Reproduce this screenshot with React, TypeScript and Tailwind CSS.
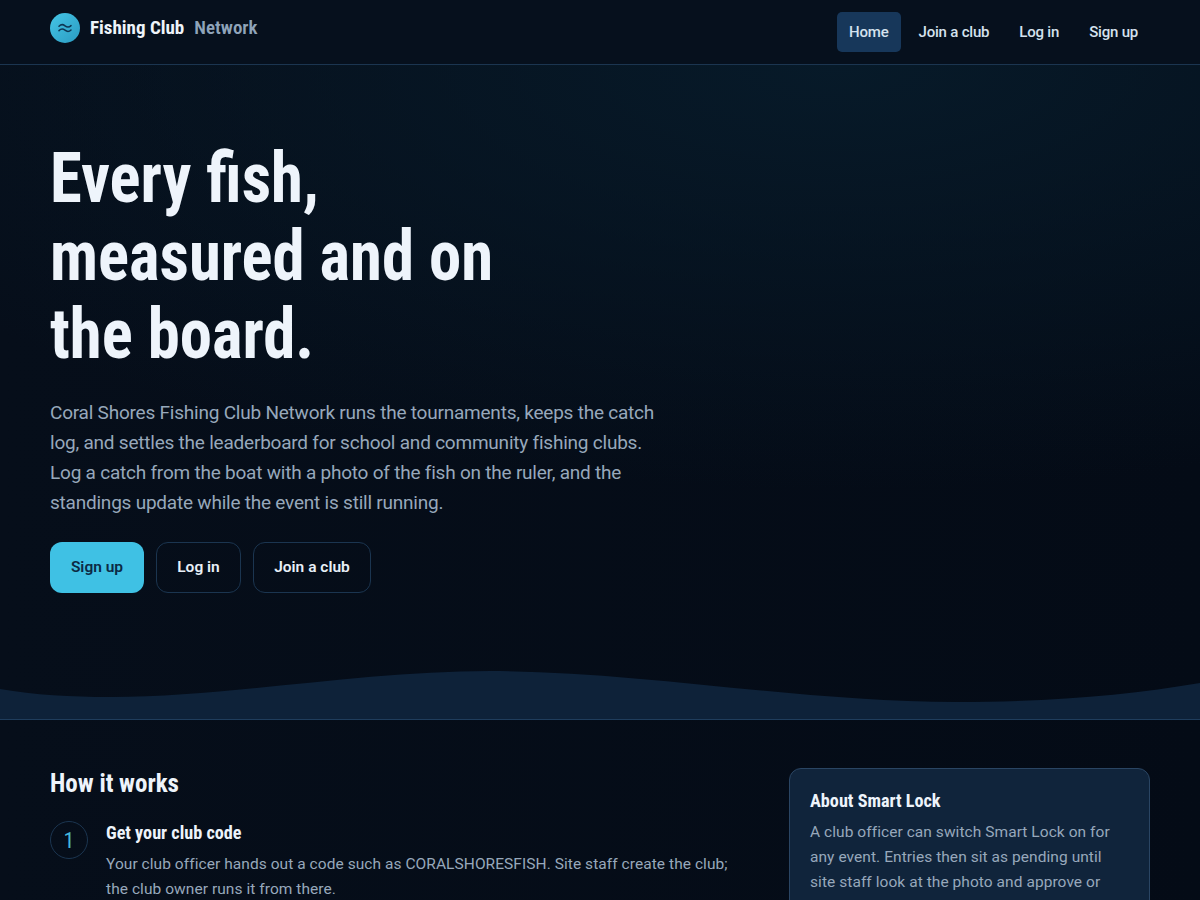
const condensed = "font-['Roboto_Condensed',Roboto,sans-serif]"

function Logo() {
  return (
    <div className="flex h-[30px] w-[30px] items-center justify-center rounded-full bg-gradient-to-br from-[#45c6e6] to-[#2a9bc2]">
      <svg width="14" height="10" viewBox="0 0 14 10" fill="none" stroke="#0e3653" strokeWidth="1.5" strokeLinecap="round">
        <path d="M1 3.2C3 1.2 5 1.2 7 2.8S11 4.6 13 2.6" />
        <path d="M1 7.6C3 5.6 5 5.6 7 7.2S11 9 13 7" />
      </svg>
    </div>
  )
}

export default function App() {
  return (
    <div className="min-h-[900px] bg-gradient-to-r from-[#060e1a] to-[#040b16] font-['Roboto',sans-serif] text-[#e8f0f8]">
      <header className="flex h-[65px] items-start justify-between border-b border-[#1b3550] bg-[#06101d] px-[50px] pt-3">
        <div className="mt-px flex items-center gap-[10px]">
          <Logo />
          <span className={`${condensed} text-[19px] font-bold leading-[30px] text-[#eef4fa]`}>Fishing Club</span>
          <span className={`${condensed} text-[19px] font-semibold leading-[30px] text-[#8fa4ba]`}>Network</span>
        </div>
        <nav className="flex gap-[6px] text-[15px] font-medium tracking-[-0.2px] text-[#d5e2ee]">
          <a className="flex h-10 items-center rounded-[5px] bg-[#17375a] px-3">Home</a>
          <a className="flex h-10 items-center rounded-[5px] px-3">Join a club</a>
          <a className="flex h-10 items-center rounded-[5px] px-3">Log in</a>
          <a className="flex h-10 items-center rounded-[5px] px-3">Sign up</a>
        </nav>
      </header>

      <section className="border-b border-[#1f3d5c] bg-[radial-gradient(ellipse_90%_65%_at_70%_0%,#071a29_0%,transparent_100%)]">
        <div className="px-[50px] pt-[74px]">
          <h1 className={`${condensed} w-[620px] origin-left scale-x-[0.925] text-[70px] font-bold leading-[78px] text-[#eef4fb]`}>
            Every fish,
            <br />
            measured and on
            <br />
            the board.
          </h1>
          <p className="mt-[25px] w-[620px] text-[19px] leading-[30px] tracking-[-0.22px] text-[#97a8bb]">
            Coral Shores Fishing Club Network runs the tournaments, keeps the catch log, and settles the leaderboard for school and community fishing clubs. Log a catch from the boat with a photo of the fish on the ruler, and the standings update while the event is still running.
          </p>
          <div className="mt-[24px] flex gap-3 text-[15.5px] font-semibold">
            <a className="flex h-[51px] w-[94px] items-center justify-center rounded-xl bg-[#3fc1e4] text-[#0c2a44]">Sign up</a>
            <a className="flex h-[51px] w-[85px] items-center justify-center rounded-xl border border-[#1b3550]">Log in</a>
            <a className="flex h-[51px] w-[118px] items-center justify-center rounded-xl border border-[#1b3550]">Join a club</a>
          </div>
        </div>
        <svg className="mt-[77px] block h-[49px] w-full" viewBox="0 0 1200 49" preserveAspectRatio="none" fill="#0e2239">
          <path d="M0,19 C35,25 70,27 111,27 C230,27 360,1 490,1 C640,1 800,32 957,32 C1050,32 1130,25 1200,13 L1200,49 L0,49 Z" />
        </svg>
      </section>

      <section className="grid grid-cols-[1fr_361px] gap-[50px] px-[50px] pt-12">
        <div>
          <h2 className={`${condensed} text-[25px] font-bold leading-[32px] text-[#eef4fb]`}>How it works</h2>
          <div className="mt-[21px] flex gap-[18px]">
            <div className={`${condensed} flex h-[38px] w-[38px] shrink-0 items-center justify-center rounded-full border border-[#1b3550] text-[22px] text-[#45b8d8]`}>1</div>
            <div>
              <h3 className={`${condensed} text-[18.2px] font-bold leading-6 text-[#eef4fb]`}>Get your club code</h3>
              <p className="mt-[7px] text-[15.5px] leading-[25px] tracking-[0.06px] text-[#97a8bb]">
                Your club officer hands out a code such as CORALSHORESFISH. Site staff create the club; the club owner runs it from there.
              </p>
            </div>
          </div>
        </div>
        <aside className="rounded-xl border border-[#2a4563] bg-[#10243b] px-5 py-[18px]">
          <h3 className={`${condensed} text-[18.2px] font-bold leading-7 text-[#eef4fb]`}>About Smart Lock</h3>
          <p className="mt-[5px] text-[15.5px] leading-[25px] tracking-[0.06px] text-[#97a8bb]">
            A club officer can switch Smart Lock on for any event. Entries then sit as pending until site staff look at the photo and approve or
          </p>
        </aside>
      </section>
    </div>
  )
}
